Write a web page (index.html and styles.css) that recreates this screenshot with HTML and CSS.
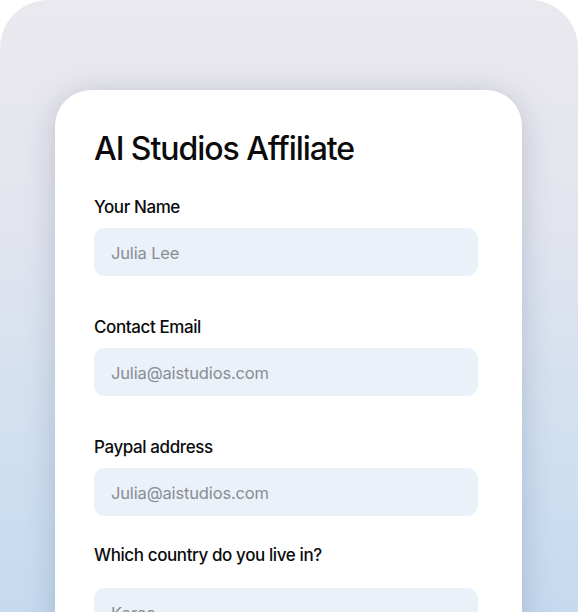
FILE: index.html
```html
<!DOCTYPE html>
<html lang="en">
<head>
<meta charset="utf-8">
<title>AI Studios Affiliate</title>
<link rel="stylesheet" href="styles.css">
</head>
<body>
<div class="frame">
  <div class="card">
    <h1 class="title">AI Studios Affiliate</h1>
    <form class="form">
      <div class="field">
        <label class="label">Your Name</label>
        <div class="input">Julia Lee</div>
      </div>
      <div class="field">
        <label class="label">Contact Email</label>
        <div class="input">Julia@aistudios.com</div>
      </div>
      <div class="field">
        <label class="label">Paypal address</label>
        <div class="input">Julia@aistudios.com</div>
      </div>
      <div class="field field-last">
        <label class="label">Which country do you live in?</label>
        <div class="input">Korea</div>
      </div>
    </form>
  </div>
</div>
</body>
</html>
```

FILE: styles.css
```css
html, body {
  margin: 0;
  padding: 0;
  background: #ffffff;
}

body {
  width: 578px;
  height: 612px;
  overflow: hidden;
  font-family: "Inter", "Open Sans", sans-serif;
}

.frame {
  width: 578px;
  height: 612px;
  border-radius: 48px 48px 0 0;
  background: linear-gradient(180deg, #ebe9ef 0%, #e3e5ee 35%, #cfdff0 75%, #c5daef 100%);
  padding-top: 90px;
  box-sizing: border-box;
  overflow: hidden;
}

.card {
  margin-left: 55px;
  width: 467px;
  height: 560px;
  background: #ffffff;
  border-radius: 36px 36px 0 0;
  box-shadow: 0 4px 30px rgba(70, 85, 125, 0.26);
  padding: 39px 44px 0 39px;
  box-sizing: border-box;
}

.title {
  margin: 0 0 28px 0;
  font-size: 32px;
  line-height: 40px;
  font-weight: 500;
  color: #0b0b0d;
  letter-spacing: -1.05px;
}

.form {
  display: flex;
  flex-direction: column;
  gap: 41px;
}

.field {
  display: flex;
  flex-direction: column;
  gap: 11px;
}

.field-last {
  margin-top: -12px;
  gap: 23px;
}

.label {
  font-size: 17px;
  line-height: 20px;
  font-weight: 500;
  color: #0b0b0d;
  letter-spacing: -0.4px;
}

.input {
  height: 48px;
  border-radius: 11px;
  background: #eaf1f8;
  padding: 2px 17px 0 17px;
  box-sizing: border-box;
  display: flex;
  align-items: center;
  font-size: 16.5px;
  color: #8a8d95;
  letter-spacing: -0.15px;
}
```
